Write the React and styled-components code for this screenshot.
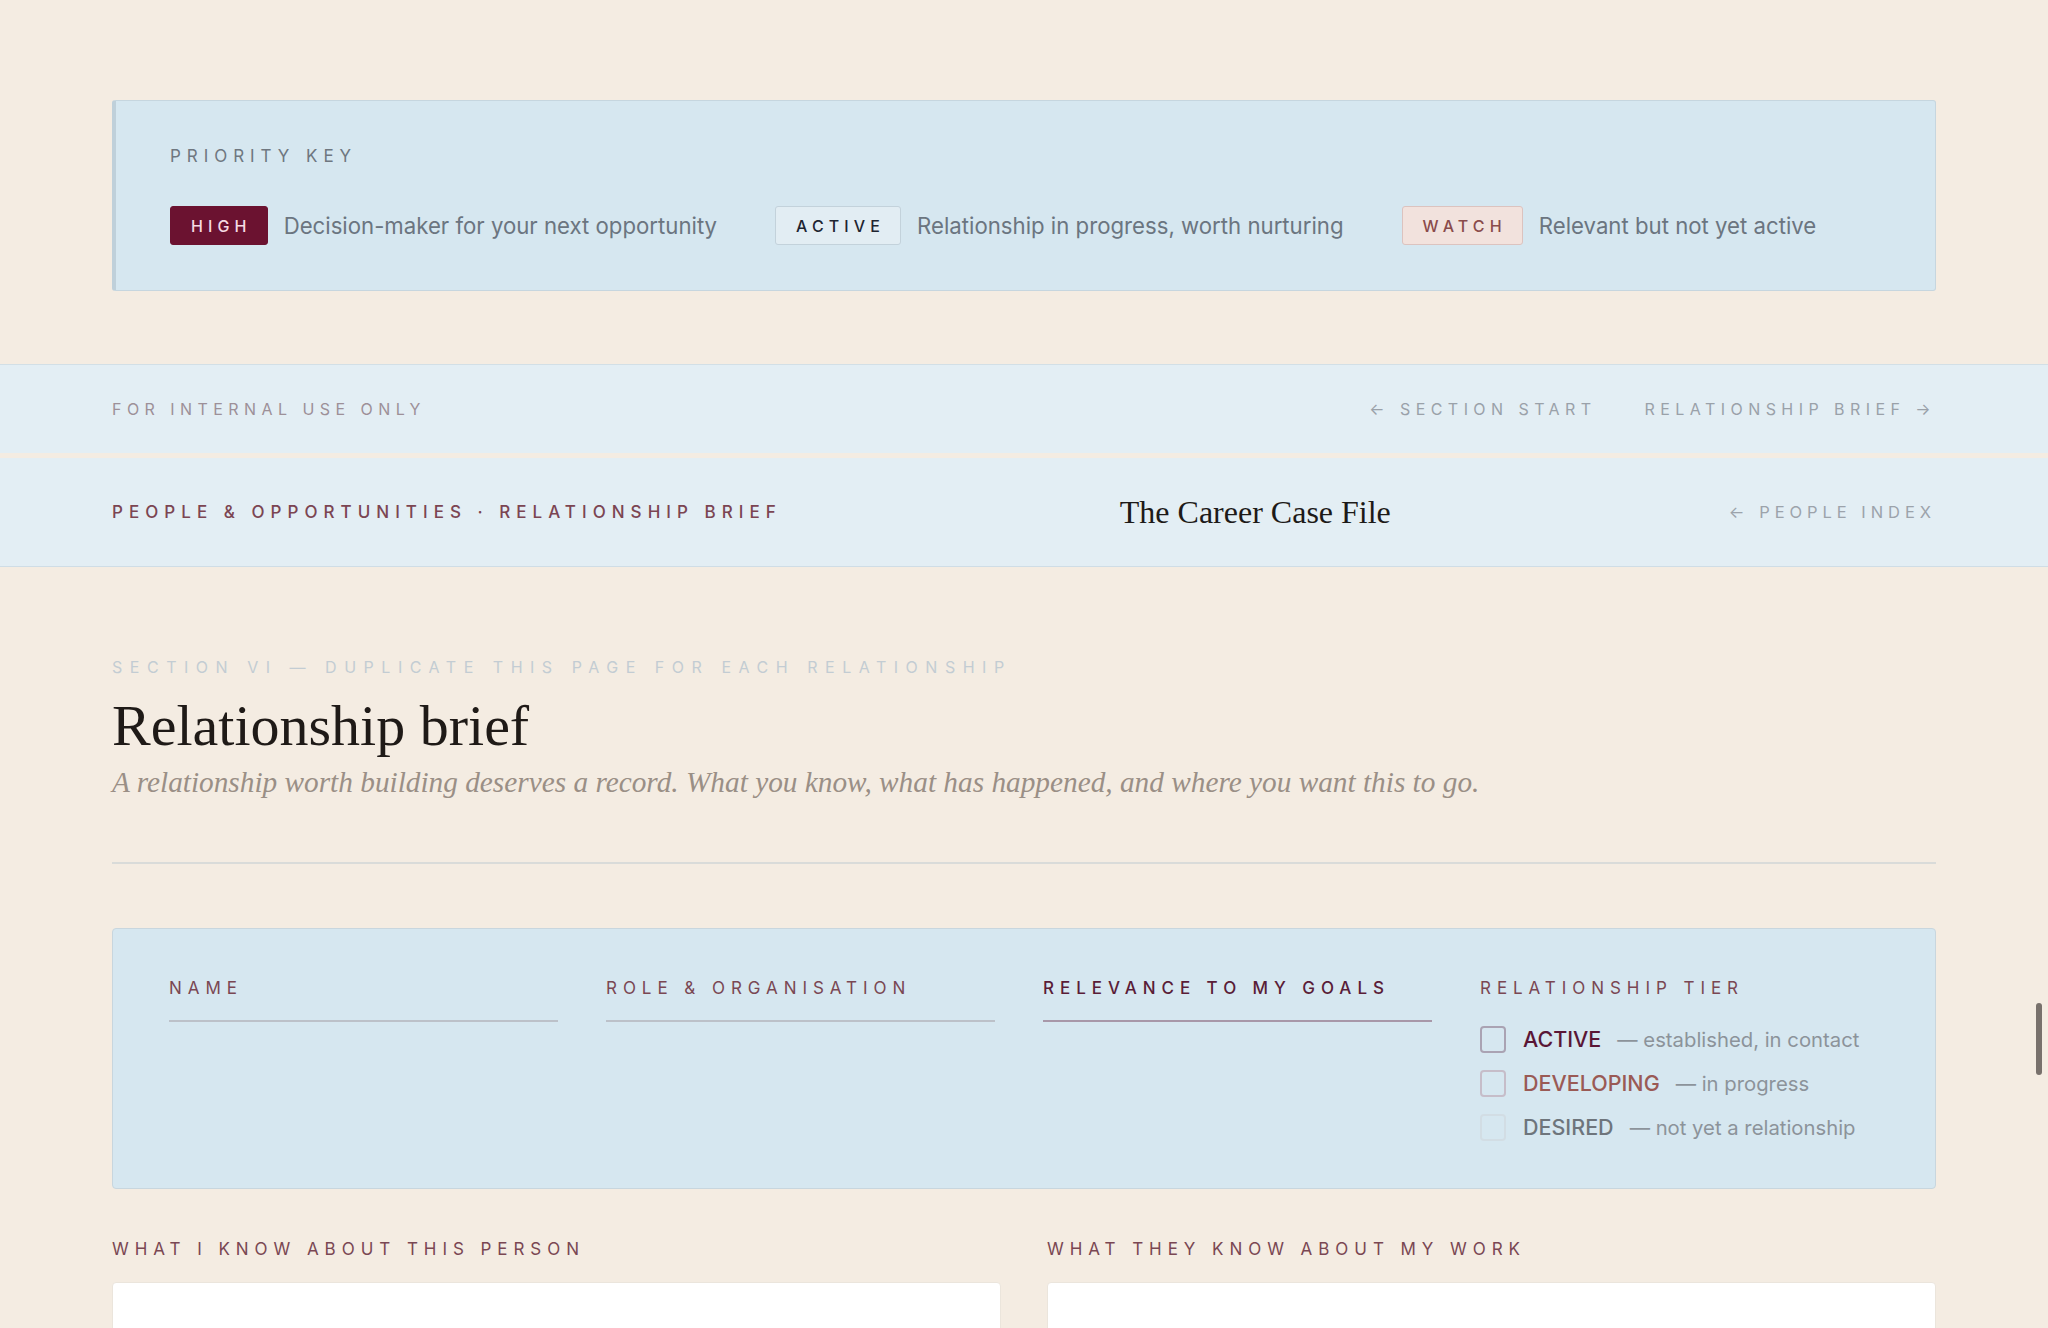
import styled, { createGlobalStyle } from "styled-components";

const GlobalStyle = createGlobalStyle`
  html, body {
    margin: 0;
    padding: 0;
    background: #f4ece2;
  }
  body {
    font-family: "Inter", "Noto Sans", sans-serif;
    -webkit-font-smoothing: antialiased;
  }
  * {
    box-sizing: border-box;
  }
`;

const Page = styled.div`
  min-height: 1328px;
  background: #f4ece2;
  overflow: hidden;
`;

const Container = styled.div`
  padding: 0 112px;
`;

const KeyBox = styled.section`
  margin-top: 100px;
  background: #d6e7f0;
  border: 1px solid #c6d6df;
  border-left: 4px solid #bfd0da;
  border-radius: 3px;
  padding: 45px 54px 45px;
`;

const Eyebrow = styled.div`
  font-size: 17px;
  line-height: 20px;
  letter-spacing: 0.35em;
  text-transform: uppercase;
  color: ${(p) => p.$color || "#6f7780"};
  font-weight: ${(p) => p.$weight || 400};
`;

const KeyRow = styled.div`
  display: flex;
  align-items: center;
  gap: 58px;
  margin-top: 40px;
`;

const KeyItem = styled.div`
  display: flex;
  align-items: center;
  gap: 16px;
`;

const badgeTones = {
  high: { bg: "#6b1230", border: "#6b1230", color: "#f6dbe3" },
  active: { bg: "#e2edf3", border: "#c3d2db", color: "#1e2430" },
  watch: { bg: "#f2e2dd", border: "#dcc3bf", color: "#8a4b4b" },
};

const Badge = styled.span`
  display: inline-flex;
  align-items: center;
  height: 39px;
  padding: 0 15px 0 20px;
  border-radius: 3px;
  font-size: 16px;
  letter-spacing: 0.32em;
  font-weight: 500;
  background: ${(p) => badgeTones[p.$tone].bg};
  border: 1px solid ${(p) => badgeTones[p.$tone].border};
  color: ${(p) => badgeTones[p.$tone].color};
`;

const KeyText = styled.span`
  font-size: 22.2px;
  color: #6b7580;
`;

const Band = styled.div`
  display: flex;
  align-items: center;
  justify-content: space-between;
  padding: 0 112px;
  background: #e3eef4;
  height: ${(p) => p.$height}px;
  margin-top: ${(p) => p.$top}px;
  border-top: ${(p) => (p.$topLine ? "1px solid #d2dfe6" : "none")};
  border-bottom: ${(p) => (p.$bottomLine ? "1px solid #cfdde6" : "none")};
`;

const BandLabel = styled.span`
  font-size: ${(p) => p.$size || 16}px;
  letter-spacing: ${(p) => p.$ls || 0.34}em;
  text-transform: uppercase;
  color: ${(p) => p.$color};
  font-weight: ${(p) => p.$weight || 400};
`;

const BandNav = styled.nav`
  display: flex;
  gap: 48px;
`;

const Masthead = styled.span`
  font-family: "Liberation Serif", "Times New Roman", serif;
  font-size: 32px;
  color: #1d1a18;
`;

const SectionHead = styled.header`
  margin-top: 90px;
`;

const SectionEyebrow = styled.div`
  font-size: 16px;
  line-height: 20px;
  letter-spacing: 0.47em;
  text-transform: uppercase;
  color: #c3ccd3;
`;

const Title = styled.h1`
  margin: 20px 0 0;
  font-family: "Liberation Serif", "Times New Roman", serif;
  font-weight: 400;
  font-size: 58px;
  line-height: 58px;
  color: #1f1a17;
`;

const Subtitle = styled.p`
  margin: 10px 0 0;
  font-family: "Liberation Serif", "Times New Roman", serif;
  font-style: italic;
  font-size: 29.3px;
  line-height: 34px;
  color: #9a8f86;
`;

const Divider = styled.hr`
  margin: 63px 0 0;
  border: 0;
  border-top: 2px solid #d9dbd9;
`;

const Card = styled.section`
  margin-top: 64px;
  background: #d6e7f0;
  border: 1px solid #c8d6de;
  border-radius: 4px;
  padding: 49px 66px 47px 56px;
  display: grid;
  grid-template-columns: repeat(4, 1fr);
  gap: 48px;
  align-items: start;
`;

const Field = styled.div`
  display: flex;
  flex-direction: column;
`;

const FieldLine = styled.div`
  margin-top: 22px;
  height: 2px;
  background: ${(p) => (p.$focus ? "#a898a9" : "#bcc1c9")};
`;

const TierList = styled.ul`
  list-style: none;
  margin: 27px 0 0;
  padding: 0;
  display: flex;
  flex-direction: column;
  gap: 16px;
`;

const TierRow = styled.li`
  display: flex;
  align-items: center;
  height: 28px;
`;

const Check = styled.span`
  width: 26px;
  height: 27px;
  border-radius: 4px;
  border: 2px solid ${(p) => p.$border};
  margin-right: 17px;
  flex: none;
`;

const TierName = styled.span`
  font-size: 21.5px;
  font-weight: 500;
  color: ${(p) => p.$color};
`;

const TierNote = styled.span`
  margin-left: 16px;
  font-size: 20.3px;
  color: #8c939a;
`;

const Notes = styled.div`
  margin-top: 50px;
  display: grid;
  grid-template-columns: 1fr 1fr;
  gap: 46px;
`;

const NoteBox = styled.div`
  margin-top: 23px;
  height: 320px;
  background: #ffffff;
  border: 1px solid #ebe5dc;
  border-radius: 4px;
`;

const ScrollThumb = styled.div`
  position: fixed;
  right: 6px;
  top: 1003px;
  width: 6px;
  height: 72px;
  border-radius: 3px;
  background: #78716c;
`;

const keyItems = [
  { tone: "high", label: "HIGH", text: "Decision-maker for your next opportunity" },
  { tone: "active", label: "ACTIVE", text: "Relationship in progress, worth nurturing" },
  { tone: "watch", label: "WATCH", text: "Relevant but not yet active" },
];

const fields = [
  { label: "Name" },
  { label: "Role & Organisation" },
  { label: "Relevance to my goals", focus: true },
];

const tiers = [
  { name: "ACTIVE", note: "— established, in contact", color: "#5a1636", border: "#aaa3b3" },
  { name: "DEVELOPING", note: "— in progress", color: "#9a5a55", border: "#c6bdc9" },
  { name: "DESIRED", note: "— not yet a relationship", color: "#6e757c", border: "#d2dde4" },
];

export default function App() {
  return (
    <Page>
      <GlobalStyle />
      <Container>
        <KeyBox>
          <Eyebrow>Priority key</Eyebrow>
          <KeyRow>
            {keyItems.map((item) => (
              <KeyItem key={item.tone}>
                <Badge $tone={item.tone}>{item.label}</Badge>
                <KeyText>{item.text}</KeyText>
              </KeyItem>
            ))}
          </KeyRow>
        </KeyBox>
      </Container>

      <Band $height={89} $top={73} $topLine>
        <BandLabel $color="#9d9098">For internal use only</BandLabel>
        <BandNav>
          <BandLabel $color="#9aa1a9">← Section start</BandLabel>
          <BandLabel $color="#9aa1a9">Relationship brief →</BandLabel>
        </BandNav>
      </Band>
      <Band $height={109} $top={5} $bottomLine>
        <BandLabel $size={17} $ls={0.355} $weight={500} $color="#7b4552">
          People &amp; Opportunities · Relationship brief
        </BandLabel>
        <Masthead>The Career Case File</Masthead>
        <BandLabel $size={16.5} $ls={0.3} $color="#9ca3ab">
          ← People index
        </BandLabel>
      </Band>

      <Container>
        <SectionHead>
          <SectionEyebrow>Section VI — Duplicate this page for each relationship</SectionEyebrow>
          <Title>Relationship brief</Title>
          <Subtitle>
            A relationship worth building deserves a record. What you know, what has happened, and
            where you want this to go.
          </Subtitle>
        </SectionHead>
        <Divider />

        <Card>
          {fields.map((f) => (
            <Field key={f.label}>
              <Eyebrow $color={f.focus ? "#5a1d38" : "#7a4753"} $weight={f.focus ? 500 : 400}>
                {f.label}
              </Eyebrow>
              <FieldLine $focus={f.focus} />
            </Field>
          ))}
          <Field>
            <Eyebrow $color="#7a4753">Relationship tier</Eyebrow>
            <TierList>
              {tiers.map((t) => (
                <TierRow key={t.name}>
                  <Check $border={t.border} />
                  <TierName $color={t.color}>{t.name}</TierName>
                  <TierNote>{t.note}</TierNote>
                </TierRow>
              ))}
            </TierList>
          </Field>
        </Card>

        <Notes>
          <Field>
            <Eyebrow $color="#7a4753">What I know about this person</Eyebrow>
            <NoteBox />
          </Field>
          <Field>
            <Eyebrow $color="#7a4753">What they know about my work</Eyebrow>
            <NoteBox />
          </Field>
        </Notes>
      </Container>
      <ScrollThumb />
    </Page>
  );
}
